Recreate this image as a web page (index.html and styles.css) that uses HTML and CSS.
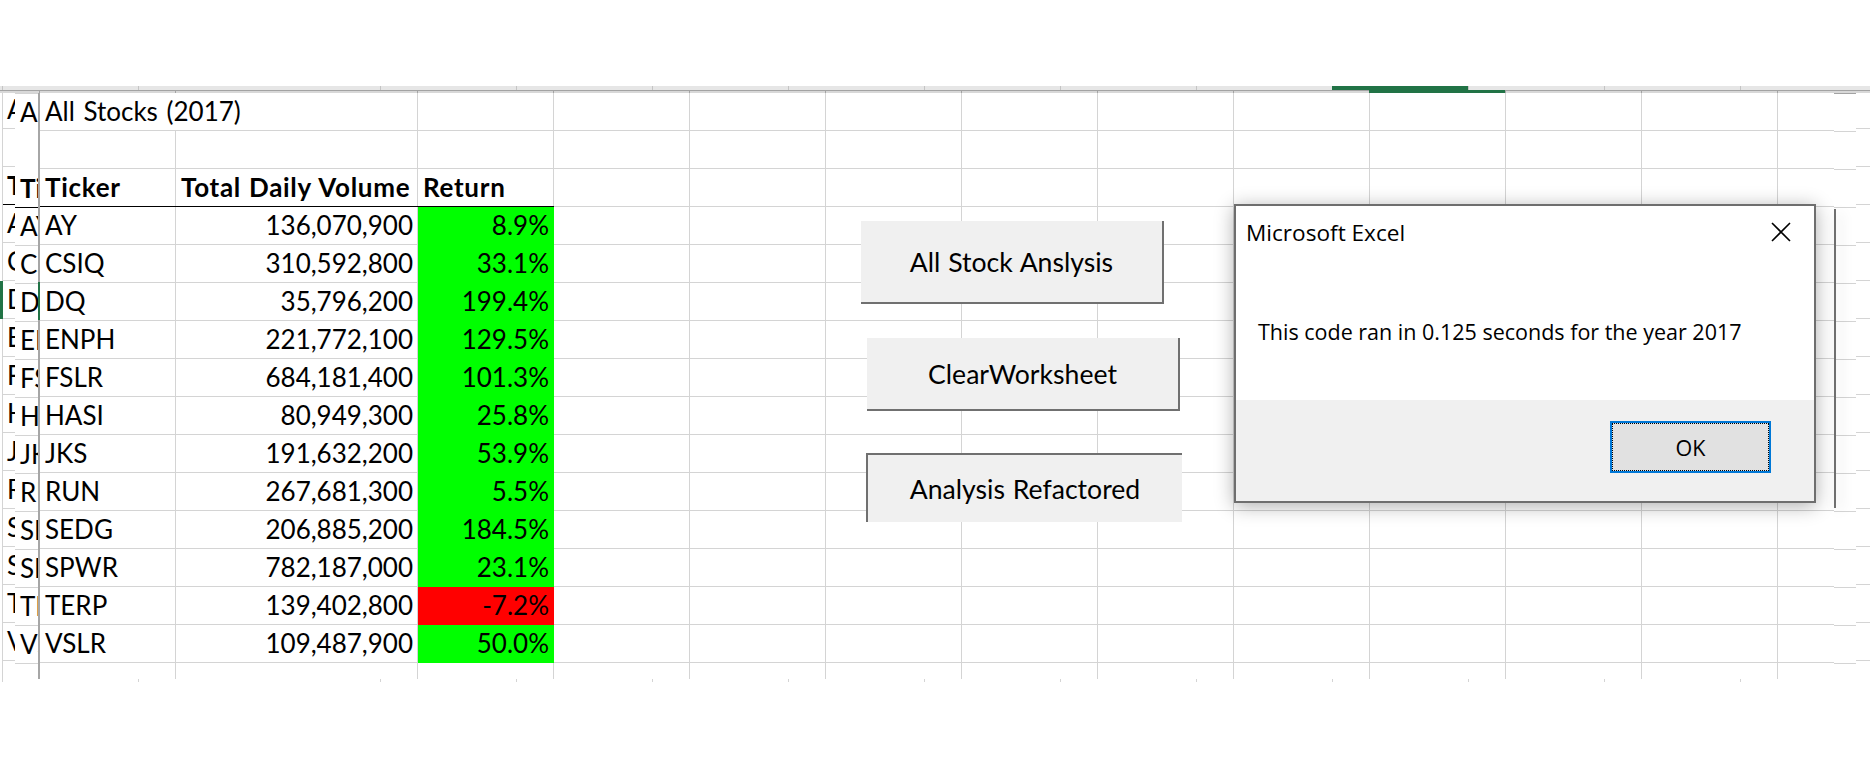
FILE: index.html
```html
<!DOCTYPE html>
<html>
<head>
<meta charset="utf-8">
<title>All Stocks (2017)</title>
<link rel="stylesheet" href="styles.css">
</head>
<body>
<div class="app">
  <div class="band band1">
    <span class="lead"></span><span></span><span class="wide"></span><span></span><span></span><span></span><span></span><span></span><span></span><span></span><span class="sel"></span><span></span><span></span><span></span>
  </div>
  <div class="band band2">
    <span class="lead"></span><span></span><span class="wide"></span><span></span><span></span><span></span><span></span><span></span><span></span><span></span><span class="sel"></span><span></span><span></span><span></span>
  </div>

  <div class="main">
    <div class="strip strip-a">
      <div class="col">
        <div class="row">All Stocks (2017)</div>
        <div class="row"></div>
        <div class="row hd">Ticker</div>
        <div class="row">AY</div>
        <div class="row">CSIQ</div>
        <div class="row cur">DQ</div>
        <div class="row">ENPH</div>
        <div class="row">FSLR</div>
        <div class="row">HASI</div>
        <div class="row">JKS</div>
        <div class="row">RUN</div>
        <div class="row">SEDG</div>
        <div class="row">SPWR</div>
        <div class="row">TERP</div>
        <div class="row">VSLR</div>
        <div class="row"></div>
      </div>
    </div>

    <div class="strip strip-b">
      <div class="col">
        <div class="row nl">All Stocks (2017)</div>
        <div class="row nl"></div>
        <div class="row hd">Ticker</div>
        <div class="row">AY</div>
        <div class="row">CSIQ</div>
        <div class="row">DQ</div>
        <div class="row">ENPH</div>
        <div class="row">FSLR</div>
        <div class="row">HASI</div>
        <div class="row">JKS</div>
        <div class="row">RUN</div>
        <div class="row">SEDG</div>
        <div class="row">SPWR</div>
        <div class="row">TERP</div>
        <div class="row">VSLR</div>
        <div class="row nl"></div>
      </div>
    </div>

    <div class="divider"><span class="mark"></span></div>

    <div class="sheet">
      <div class="cell title">All Stocks (2017)</div>
      <div class="cell b"></div>

      <div class="cell b hd">Ticker</div><div class="cell c hd">Total Daily Volume</div><div class="cell d hd">Return</div>

      <div class="cell b">AY</div><div class="cell c num">136,070,900</div><div class="cell d num up">8.9%</div>
      <div class="cell b">CSIQ</div><div class="cell c num">310,592,800</div><div class="cell d num up">33.1%</div>
      <div class="cell b">DQ</div><div class="cell c num">35,796,200</div><div class="cell d num up">199.4%</div>
      <div class="cell b">ENPH</div><div class="cell c num">221,772,100</div><div class="cell d num up">129.5%</div>
      <div class="cell b">FSLR</div><div class="cell c num">684,181,400</div><div class="cell d num up">101.3%</div>
      <div class="cell b">HASI</div><div class="cell c num">80,949,300</div><div class="cell d num up">25.8%</div>
      <div class="cell b">JKS</div><div class="cell c num">191,632,200</div><div class="cell d num up">53.9%</div>
      <div class="cell b">RUN</div><div class="cell c num">267,681,300</div><div class="cell d num up">5.5%</div>
      <div class="cell b">SEDG</div><div class="cell c num">206,885,200</div><div class="cell d num up">184.5%</div>
      <div class="cell b">SPWR</div><div class="cell c num">782,187,000</div><div class="cell d num up">23.1%</div>
      <div class="cell b">TERP</div><div class="cell c num">139,402,800</div><div class="cell d num down">-7.2%</div>
      <div class="cell b">VSLR</div><div class="cell c num">109,487,900</div><div class="cell d num up">50.0%</div>
    </div>

    <div class="strip strip-r1"></div>
    <div class="strip strip-r2"></div>
  </div>

  <div class="band band3">
    <span class="lead"></span><span></span><span class="wide"></span><span></span><span></span><span></span><span></span><span></span><span></span><span></span><span></span><span></span><span></span><span></span>
  </div>

  <button class="vba vba-1">All Stock Anslysis</button>
  <button class="vba vba-2">ClearWorksheet</button>
  <button class="vba vba-3">Analysis Refactored</button>

  <div class="ghost-edge"></div>

  <div class="dialog">
    <div class="dlg-body">
      <div class="dlg-head">
        <span class="dlg-title">Microsoft Excel</span>
        <svg class="dlg-close" viewBox="0 0 20 20" aria-label="Close">
          <path d="M1 1 L19 19 M19 1 L1 19" stroke="#000" stroke-width="1.6" fill="none"/>
        </svg>
      </div>
      <p class="dlg-msg">This code ran in 0.125 seconds for the year 2017</p>
    </div>
    <div class="dlg-foot">
      <button class="dlg-ok">OK</button>
    </div>
  </div>
</div>
</body>
</html>
```

FILE: styles.css
```css
* { box-sizing: border-box; }

body {
  margin: 0;
  background: #fff;
  font-family: "Lato", "Liberation Sans", sans-serif;
  color: #000;
}

.app {
  position: relative;
  width: 1870px;
  height: 768px;
  padding-top: 86px;
  overflow: hidden;
}

/* column header strips */
.band {
  display: flex;
  overflow: hidden;
}
.band > span {
  flex: 0 0 136px;
  border-left: 1px solid #c4c4c4;
}
.band > span.lead {
  flex-basis: 2px;
  border-left: 0;
}
.band > span.wide { flex-basis: 242px; }
.band > span.sel {
  background: #217346;
  border-left-color: #217346;
}
.band1 {
  height: 4px;
  background: #e6e6e6;
}
.band2 {
  height: 3px;
  background: linear-gradient(#a3a3a3 0 1px, #d8d8d8 1px);
}
.band2 > span { border-left-color: #a3a3a3; }
.band2 > span.lead { flex-basis: 39px; }
.band3 { height: 3px; }
.band3 > span { border-left-color: #d4d4d4; }

/* sheet body */
.main {
  display: flex;
  height: 586px;
  font-size: 26px;
  word-spacing: 2px;
}

.strip {
  flex-shrink: 0;
  overflow: hidden;
}

.row {
  height: 38px;
  line-height: 37px;
  border-bottom: 1px solid #d4d4d4;
  white-space: nowrap;
}
.row.hd {
  font-weight: 700;
  border-bottom-color: #000;
}
.row.nl { border-bottom-color: transparent; }

.strip-a {
  width: 15px;
  padding-left: 2px;
}
.strip-a .col {
  margin-top: -2px;
  border-left: 1px solid #d4d4d4;
}
.strip-a .row { padding-left: 4px; }
.strip-a .row.cur { box-shadow: -3px 0 0 #217346; }

.strip-b {
  width: 23px;
  background: #fff;
}
.strip-b .col { border-top: 1px solid #d4d4d4; }
.strip-b .row { padding-left: 5px; }

.divider {
  flex: 0 0 2px;
  background: #a6a6a6;
}
.divider .mark {
  display: block;
  height: 38px;
  margin-top: 189px;
  background: #217346;
}

.sheet {
  flex: 0 0 1794px;
  display: grid;
  grid-template-columns: 136px 242px 136px repeat(9, 136px) 56px;
  grid-template-rows: repeat(15, 38px) 16px;
  overflow: hidden;
  background:
    linear-gradient(#d4d4d4, #d4d4d4) 135px 0 / 1px 100% no-repeat,
    linear-gradient(#d4d4d4, #d4d4d4) 377px 0 / 1px 100% no-repeat,
    repeating-linear-gradient(to right, transparent 0 135px, #d4d4d4 135px 136px) 378px 0 / 1360px 100% no-repeat,
    repeating-linear-gradient(to bottom, transparent 0 37px, #d4d4d4 37px 38px);
}

.cell {
  line-height: 37px;
  padding: 0 5px;
  white-space: nowrap;
}
.cell.title {
  grid-column: 1 / span 2;
  background: #fff;
  border-right: 1px solid #d4d4d4;
  border-bottom: 1px solid #d4d4d4;
}
.b { grid-column: 1; }
.c { grid-column: 2; }
.d { grid-column: 3; }
.num { text-align: right; }
.cell.hd {
  font-weight: 700;
  letter-spacing: 0.7px;
  word-spacing: 1px;
  border-bottom: 1px solid #000;
}
.up { background: #00ff00; }
.down { background: #ff0000; }

.strip-r1 {
  width: 22px;
  border-top: 1px solid #a3a3a3;
  background: repeating-linear-gradient(to bottom, transparent 0 37px, #d4d4d4 37px 38px);
}
.strip-r2 {
  width: 14px;
  background: repeating-linear-gradient(to bottom, transparent 0 37px, #d4d4d4 37px 38px) 0 -2px;
}

/* macro buttons placed on the sheet */
.vba {
  position: absolute;
  display: flex;
  align-items: center;
  justify-content: center;
  padding: 0;
  margin: 0;
  border: 0;
  background: #f0f0f0;
  font-family: "Lato", "Liberation Sans", sans-serif;
  font-size: 26.6px;
  word-spacing: 1px;
  color: #000;
}
.vba-1 {
  left: 861px;
  top: 221px;
  width: 303px;
  height: 83px;
  border-right: 2px solid #707070;
  border-bottom: 2px solid #707070;
}
.vba-2 {
  left: 867px;
  top: 338px;
  width: 313px;
  height: 73px;
  border-right: 2px solid #707070;
  border-bottom: 2px solid #707070;
}
.vba-3 {
  left: 866px;
  top: 453px;
  width: 316px;
  height: 69px;
  border-top: 2px solid #707070;
  border-left: 2px solid #707070;
}

.ghost-edge {
  position: absolute;
  left: 1834px;
  top: 209px;
  width: 2px;
  height: 299px;
  background: #707070;
  box-shadow: 4px 3px 14px rgba(0, 0, 0, 0.2);
}

/* message box */
.dialog {
  position: absolute;
  left: 1234px;
  top: 204px;
  width: 582px;
  height: 299px;
  display: flex;
  flex-direction: column;
  border: 2px solid #6e6e6e;
  background: #fff;
  box-shadow: 0 3px 18px rgba(0, 0, 0, 0.32);
  font-family: "Open Sans", "Noto Sans", sans-serif;
  color: #000;
}
.dlg-body {
  flex: 1;
  padding: 12px 23px 0 10px;
}
.dlg-head {
  display: flex;
  justify-content: space-between;
  align-items: flex-start;
}
.dlg-title {
  font-size: 22.6px;
  line-height: 30px;
}
.dlg-close {
  width: 20px;
  height: 20px;
  margin-top: 4px;
}
.dlg-msg {
  margin: 69px 0 0 12px;
  font-size: 21.5px;
  line-height: 30px;
}
.dlg-foot {
  flex: 0 0 101px;
  display: flex;
  justify-content: flex-end;
  align-items: flex-start;
  padding: 21px 43px 0 0;
  background: #f0f0f0;
}
.dlg-ok {
  width: 161px;
  height: 52px;
  padding: 0;
  margin: 0;
  border: 2px solid #0078d7;
  outline: 1px dotted #000;
  outline-offset: -3px;
  background: #e1e1e1;
  font-family: "Open Sans", "Noto Sans", sans-serif;
  font-size: 21.5px;
  color: #000;
}
```
